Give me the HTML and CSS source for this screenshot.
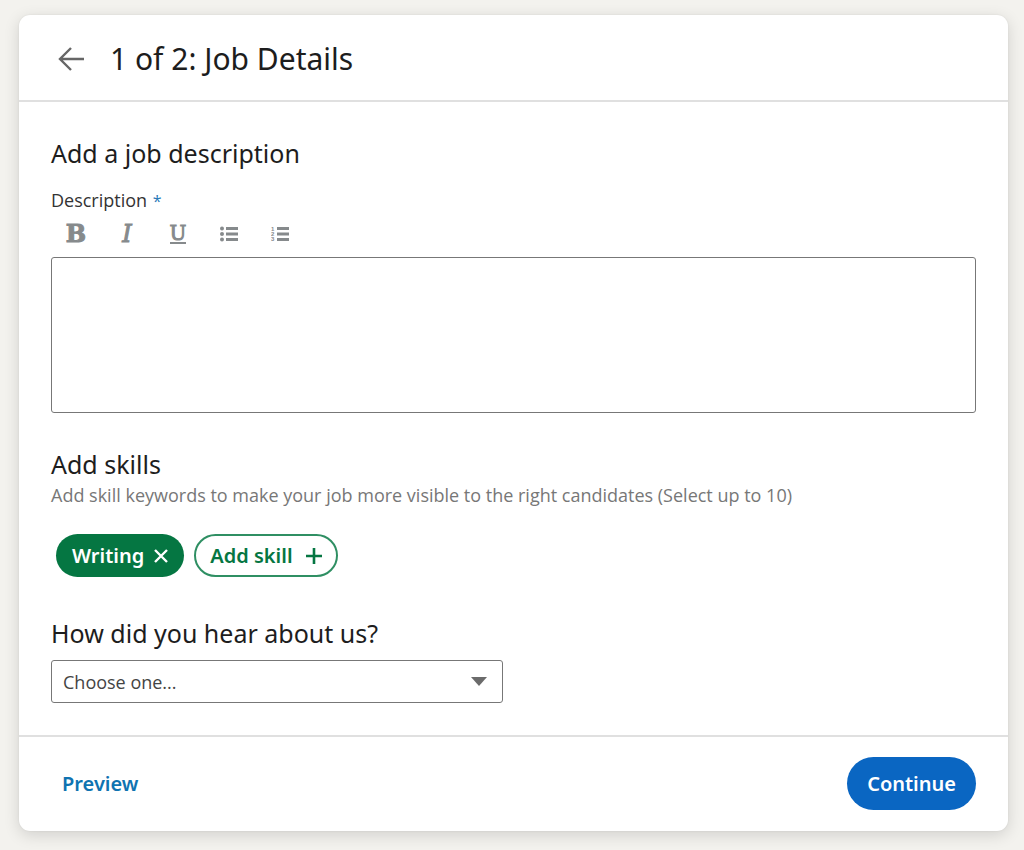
FILE: index.html
```html
<!DOCTYPE html>
<html lang="en">
<head>
<meta charset="utf-8">
<meta name="viewport" content="width=device-width, initial-scale=1">
<title>Job Details</title>
<link rel="stylesheet" href="styles.css">
</head>
<body>
<main class="card">
  <header class="card-header">
    <button class="back" type="button" aria-label="Back">
      <svg width="26" height="24" viewBox="0 0 26 24" fill="none" stroke="currentColor" stroke-width="2.4"><path d="M26 12H2M13 1L2 12L13 23"/></svg>
    </button>
    <h1 class="title">1 of 2: Job Details</h1>
  </header>

  <form class="card-body" id="job-form">
    <section class="description">
      <h2 class="heading">Add a job description</h2>
      <label class="label" for="description">Description <span class="required">*</span></label>
      <div class="toolbar">
        <button class="tool tool-bold" type="button" aria-label="Bold">B</button>
        <button class="tool tool-italic" type="button" aria-label="Italic">I</button>
        <button class="tool tool-underline" type="button" aria-label="Underline"><span class="underlined">U</span></button>
        <button class="tool" type="button" aria-label="Bulleted list">
          <svg width="18" height="16" viewBox="0 0 18 16" fill="currentColor"><circle cx="2" cy="2.5" r="2"/><circle cx="2" cy="8" r="2"/><circle cx="2" cy="13.5" r="2"/><path d="M6 1h12v3H6zM6 6.5h12v3H6zM6 12h12v3H6z"/></svg>
        </button>
        <button class="tool" type="button" aria-label="Numbered list">
          <svg class="numbers" width="18" height="16" viewBox="0 0 18 16" fill="currentColor"><text x="0" y="5">1</text><text x="0" y="10">2</text><text x="0" y="15">3</text><path d="M6 1h12v3H6zM6 6.5h12v3H6zM6 12h12v3H6z"/></svg>
        </button>
      </div>
      <textarea class="editor" id="description" required></textarea>
    </section>

    <section class="skills">
      <h2 class="heading">Add skills</h2>
      <p class="hint">Add skill keywords to make your job more visible to the right candidates (Select up to 10)</p>
      <div class="pills">
        <button class="pill pill-selected" type="button">Writing
          <svg width="14" height="14" viewBox="0 0 14 14" fill="none" stroke="currentColor" stroke-width="2.4"><path d="M1 1L13 13M13 1L1 13"/></svg>
        </button>
        <button class="pill pill-add" type="button">Add skill
          <svg width="16" height="16" viewBox="0 0 16 16" fill="none" stroke="currentColor" stroke-width="2.6"><path d="M8 0V16M0 8H16"/></svg>
        </button>
      </div>
    </section>

    <section class="source">
      <label class="heading" for="source">How did you hear about us?</label>
      <div class="select-wrap">
        <select class="select" id="source"><option>Choose one...</option></select>
        <svg class="caret" width="16" height="9" viewBox="0 0 16 9" fill="currentColor"><path d="M0 0H16L8 9Z"/></svg>
      </div>
    </section>
  </form>

  <footer class="card-footer">
    <a class="preview" href="#preview">Preview</a>
    <button class="continue" type="submit" form="job-form">Continue</button>
  </footer>
</main>
</body>
</html>
```
FILE: styles.css
```css
* {
  box-sizing: border-box;
}

body {
  margin: 0;
  padding: 15px 16px 18px 19px;
  background: #f3f2ee;
  color: #1d1d1d;
  font-family: "Noto Sans", "Open Sans", sans-serif;
}

button,
select,
textarea {
  font: inherit;
  color: inherit;
}

button {
  padding: 0;
  border: 0;
  background: none;
  cursor: pointer;
}

h1,
h2,
p {
  margin: 0;
  font-weight: 400;
}

.card {
  background: #fff;
  border-radius: 11px;
  box-shadow: 0 4px 16px rgba(0, 0, 0, 0.14), 0 0 2px rgba(0, 0, 0, 0.08);
}

.card-header {
  display: flex;
  align-items: center;
  gap: 26px;
  padding: 22px 39px 19px;
  border-bottom: 2px solid #e0e0e0;
}

.back {
  display: flex;
  color: #666;
}

.title {
  font-size: 30px;
  line-height: 44px;
}

.card-body {
  padding: 33px 32px 32px;
}

.heading {
  display: block;
  font-size: 25px;
  line-height: 36px;
}

.label {
  display: block;
  margin-top: 17px;
  font-family: "Open Sans", sans-serif;
  font-size: 18px;
  line-height: 24px;
  color: #333;
}

.required {
  margin-left: 1px;
  color: #2a7ab8;
  font-size: 16px;
}

.toolbar {
  display: flex;
  gap: 1px;
  margin-top: 3px;
}

.tool {
  display: flex;
  align-items: center;
  justify-content: center;
  width: 50px;
  height: 36px;
  color: #868a8c;
  font-family: "DejaVu Serif", serif;
  font-size: 24px;
  line-height: 36px;
}

.tool-bold {
  font-weight: 700;
}

.tool-italic {
  font-style: italic;
}

.tool-bold,
.tool-italic,
.tool-underline {
  -webkit-text-stroke: 1px currentColor;
}

.underlined {
  border-bottom: 2px solid currentColor;
  font-size: 20px;
  line-height: 18px;
}

.numbers {
  font-family: "Liberation Sans", sans-serif;
  font-size: 6px;
  font-weight: 700;
}

.editor {
  display: block;
  width: 100%;
  height: 156px;
  margin-top: 5px;
  padding: 12px;
  border: 1px solid #777;
  border-radius: 3px;
  background: #fff;
  font-size: 18px;
  resize: none;
}

.skills {
  margin-top: 33px;
}

.hint {
  font-family: "Open Sans", sans-serif;
  font-size: 18px;
  line-height: 26px;
  color: #777;
}

.pills {
  display: flex;
  flex-wrap: wrap;
  gap: 10px;
  margin-top: 26px;
  padding-left: 5px;
}

.pill {
  display: flex;
  align-items: center;
  height: 43px;
  padding: 0 16px;
  border-radius: 22px;
  font-size: 20px;
  font-weight: 600;
}

.pill-selected {
  gap: 10px;
  background: #057642;
  color: #fff;
}

.pill-add {
  gap: 13px;
  border: 2px solid #2f8f63;
  padding: 0 14px;
  color: #057642;
}

.source {
  margin-top: 38px;
}

.select-wrap {
  position: relative;
  max-width: 452px;
  margin-top: 9px;
}

.select {
  display: block;
  width: 100%;
  height: 43px;
  padding: 0 40px 0 11px;
  border: 1px solid #777;
  border-radius: 3px;
  background: #fff;
  color: #444;
  font-family: "Open Sans", sans-serif;
  font-size: 18px;
  appearance: none;
}

.caret {
  position: absolute;
  top: 17px;
  right: 16px;
  color: #6b6b6b;
  pointer-events: none;
}

.card-footer {
  display: flex;
  align-items: center;
  justify-content: space-between;
  padding: 20px 32px 21px 43px;
  border-top: 2px solid #e0e0e0;
}

.preview {
  color: #0f73b1;
  font-size: 20px;
  font-weight: 600;
  text-decoration: none;
}

.continue {
  height: 53px;
  padding: 0 20px;
  border-radius: 27px;
  background: #0a66c2;
  color: #fff;
  font-size: 20px;
  font-weight: 600;
}
```
